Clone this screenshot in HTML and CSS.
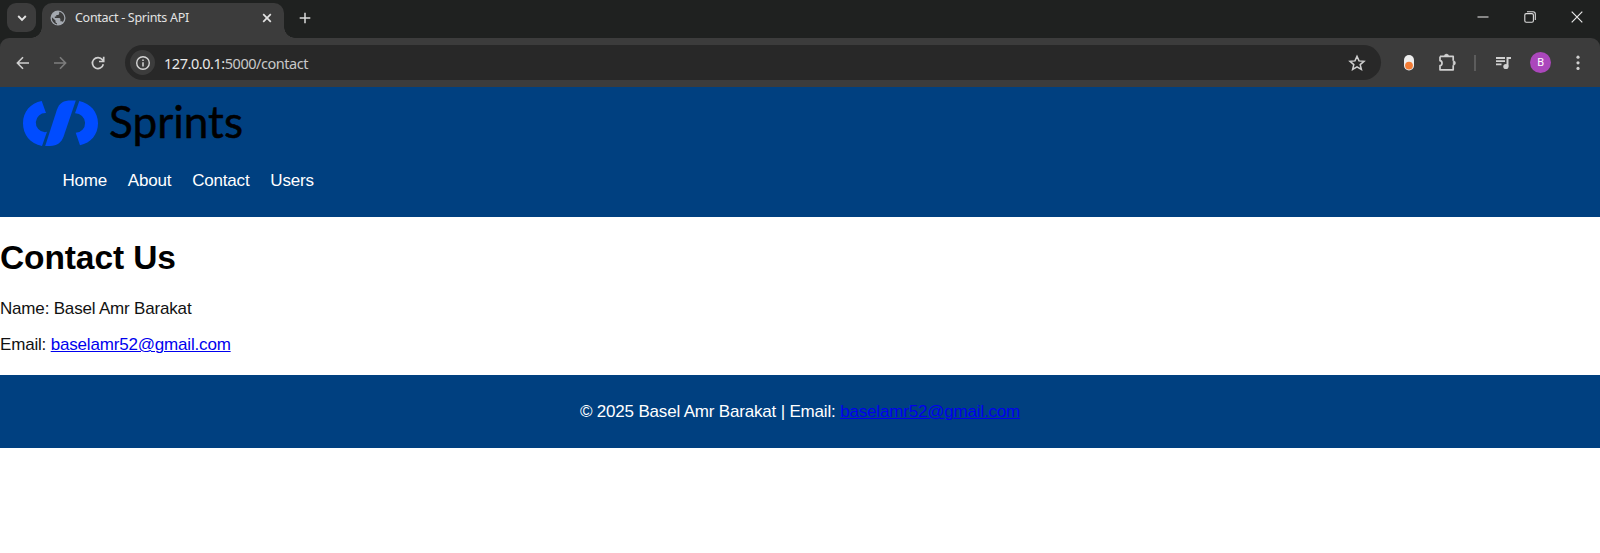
FILE: index.html
```html
<!DOCTYPE html>
<html lang="en">
<head>
<meta charset="utf-8">
<title>Contact - Sprints API</title>
<link rel="stylesheet" href="styles.css">
</head>
<body>
<div class="browser-chrome">
<div class="tabstrip">
  <div class="tab-search"><svg width="12" height="10" viewBox="0 0 12 10"><path d="M2.200 3 6 6.800 9.800 3" fill="none" stroke="#e3e3e3" stroke-width="1.900"/></svg></div>
  <div class="tab">
    <svg class="globe" width="16" height="16" viewBox="0 0 16 16"><circle cx="8" cy="8" r="7.500" fill="#a4a9b0"/><path d="M9.200 1.800v1.700c0 .9-.7 1.500-1.600 1.500H6.300v1.500H4.800V8H9c.8 0 1.400.6 1.400 1.400v1.800h1.200c.6 0 1 .4 1.200.8A6.300 6.300 0 0 0 9.200 1.800ZM1.900 7.200 5.500 10.500v1.300c0 .8.600 1.400 1.500 1.400v1.200A6.300 6.300 0 0 1 1.900 7.200Z" fill="#3c3c3c"/></svg>
    <span class="tab-title">Contact - Sprints API</span>
    <svg class="tab-close" width="10" height="10" viewBox="0 0 10 10"><path d="m1.200 1.200 7.600 7.600m0-7.600L1.200 8.800" stroke="#e3e3e3" stroke-width="1.700"/></svg>
  </div>
  <svg class="new-tab" width="12" height="12" viewBox="0 0 12 12"><path d="M6 .7v10.600M.7 6h10.600" stroke="#dadada" stroke-width="1.500"/></svg>
  <div class="window-buttons">
    <svg width="12" height="12" viewBox="0 0 12 12"><path d="M.5 6h11" stroke="#ddd" stroke-width="1.100"/></svg>
    <svg width="12" height="12" viewBox="0 0 12 12"><g fill="none" stroke="#ddd" stroke-width="1.100"><rect x=".8" y="2.600" width="8.600" height="8.600" rx="1.500"/><path d="M3 .8h6a2.300 2.300 0 0 1 2.300 2.300v6"/></g></svg>
    <svg width="12" height="12" viewBox="0 0 12 12"><path d="m.7.7 10.600 10.600m0-10.600L.7 11.300" stroke="#e8e8e8" stroke-width="1.200"/></svg>
  </div>
</div>
<div class="toolbar">
  <svg class="back" width="14" height="14" viewBox="0 0 14 14"><path d="M13 7H1.700M7 1.300 1.400 7 7 12.700" fill="none" stroke="#d0d0d0" stroke-width="1.600"/></svg>
  <svg class="forward" width="14" height="14" viewBox="0 0 14 14"><path d="M1 7h11.300M7 1.300 12.600 7 7 12.700" fill="none" stroke="#7d7d7d" stroke-width="1.600"/></svg>
  <svg class="reload" width="14" height="14" viewBox="0 0 14 14"><path d="M12.300 8.300A5.500 5.500 0 1 1 11.400 3.800L12.400 5M12.700.8v4.700H8" fill="none" stroke="#d0d0d0" stroke-width="1.700"/></svg>
  <div class="address">
    <span class="site-info"><svg width="16" height="16" viewBox="0 0 16 16"><circle cx="8" cy="8" r="6.300" fill="none" stroke="#d6d6d6" stroke-width="1.400"/><path d="M8 7.200v4.200M8 4.500v1.500" stroke="#d6d6d6" stroke-width="1.500"/></svg></span>
    <span class="url">127.0.0.1:<span class="url-path">5000/contact</span></span>
    <svg class="star" width="18" height="18" viewBox="0 0 18 18"><path d="m9 2.300 2 4.600 5 .4-3.800 3.300 1.200 4.900L9 12.900l-4.400 2.600 1.200-4.900L2 7.300l5-.4Z" fill="none" stroke="#d0d0d0" stroke-width="1.500"/></svg>
  </div>
  <svg class="extension" width="10" height="16" viewBox="0 0 10 16"><rect width="10" height="15.500" rx="5" fill="#eee"/><circle cx="5" cy="10.600" r="3.900" fill="#f37c35"/></svg>
  <svg class="puzzle" width="19" height="19" viewBox="0 0 19 19"><path d="M2 3.400h13.200v4.400M2 3.400v4.300c2.700.3 2.700 4.700 0 5v4.100h13.200v-4.600" fill="none" stroke="#d0d0d0" stroke-width="1.700" stroke-linejoin="round"/><path d="M6.300 3.300a2.200 2.200 0 0 1 4.400 0ZM15.200 7.700a2.300 2.300 0 0 1 0 4.600Z" fill="#d0d0d0" stroke="#d0d0d0" stroke-width=".5"/></svg>
  <span class="divider"></span>
  <svg class="media" width="17" height="14" viewBox="0 0 17 14"><path d="M1 2h9M1 5.200h9M1 8.400h5.500" stroke="#d0d0d0" stroke-width="1.800"/><path d="M12.500 10.500V2H16" fill="none" stroke="#d0d0d0" stroke-width="2"/><circle cx="10.900" cy="10.500" r="2.600" fill="#d0d0d0"/></svg>
  <span class="avatar">B</span>
  <svg class="more" width="4" height="16" viewBox="0 0 4 16"><g fill="#d0d0d0"><circle cx="2" cy="2.200" r="1.600"/><circle cx="2" cy="7.800" r="1.600"/><circle cx="2" cy="13.400" r="1.600"/></g></svg>
</div>
</div>
<header class="site-header">
  <svg class="logo" width="240" height="62" viewBox="22 90 240 62" role="img" aria-label="Sprints">
    <g fill="#004cff"><path d="M41.700 101.100 46 113A9 9 0 0 0 44.900 132.300L47 131.700 42 146.100C30 143.500 23 134.500 23 123.300 23 112 30.500 103 41.700 101.100Z"/><path d="M75.800 100.600H71C63.500 100.600 59.500 103 57 109.500L45.200 146H50C57.200 146 61.500 142.500 63.600 136.600Z"/><path d="M79.300 101C90.500 103.500 98 112 98 123.300 98 134.700 90.800 143 80 145.200L75.700 132.800A9.200 9.200 0 0 0 75 113.300Z"/></g>
    <text class="logo-text" x="109" y="138" textLength="134" lengthAdjust="spacingAndGlyphs">Sprints</text>
  </svg>
  <nav><ul class="nav-list"><li>Home</li><li>About</li><li>Contact</li><li>Users</li></ul></nav>
</header>
<main class="content">
  <h1>Contact Us</h1>
  <p>Name: Basel Amr Barakat</p>
  <p>Email: <a href="mailto:baselamr52@gmail.com">baselamr52@gmail.com</a></p>
</main>
<footer class="site-footer"><p>© 2025 Basel Amr Barakat | Email: <a href="mailto:baselamr52@gmail.com">baselamr52@gmail.com</a></p></footer>
</body>
</html>
```
FILE: styles.css
```css
* { box-sizing: border-box; }
body { margin: 0; height: 553px; overflow: hidden; background: #fff; font: 17px/20px "Liberation Sans", Arial, sans-serif; letter-spacing: -.18px; color: #111; }
svg { display: block; flex: none; overflow: visible; }
.browser-chrome { background: #1f2120; }
.tabstrip { display: flex; height: 38px; padding-left: 7px; }
.tab-search { display: flex; align-items: center; justify-content: center; width: 29px; height: 29px; margin-top: 3px; border-radius: 9px; background: #3c3c3c; }
.tab { position: relative; display: flex; align-items: center; width: 242px; height: 35px; margin: 3px 0 0 6px; padding: 0 12px 6px 8px; border-radius: 10px 10px 0 0; background: #3c3c3c; }
.tab::before, .tab::after { content: ""; position: absolute; bottom: 0; width: 11px; height: 11px; }
.tab::before { left: -11px; background: radial-gradient(circle at 0 0, transparent 10.5px, #3c3c3c 11px); }
.tab::after { right: -11px; background: radial-gradient(circle at 100% 0, transparent 10.5px, #3c3c3c 11px); }
.tab-title { margin-left: 9px; font: 12.5px/18px "Noto Sans", sans-serif; letter-spacing: -.29px; color: #e3e3e3; white-space: nowrap; }
.tab-close { margin-left: auto; }
.new-tab { margin: 12px 0 0 15px; }
.window-buttons { display: flex; gap: 35px; margin: 11px 17px 0 auto; }
.toolbar { display: flex; align-items: center; height: 49px; padding: 0 20px 0 16px; background: #3c3c3c; border-radius: 9px 9px 0 0; }
.forward { margin-left: 23px; }
.reload { margin-left: 24px; }
.address { display: flex; align-items: center; width: 1256px; height: 35px; margin-left: 20px; padding: 0 15px 0 5px; border-radius: 18px; background: #282828; }
.site-info { display: flex; align-items: center; justify-content: center; width: 25px; height: 25px; border-radius: 50%; background: #3c3c3c; }
.url { margin-left: 9px; font: 14.5px/20px "Noto Sans", sans-serif; letter-spacing: -.46px; color: #e8e8e8; }
.url-path { color: #c8c8c8; }
.star { margin-left: auto; }
.extension { margin-left: 23px; }
.puzzle { margin-left: 24px; }
.divider { width: 2px; height: 16px; margin-left: 17px; background: #5c5c5c; }
.media { margin-left: 19px; }
.avatar { width: 21px; height: 21px; margin-left: 18px; border-radius: 50%; background: #ab47bc; color: #fff; text-align: center; font: 11px/21px Roboto, sans-serif; }
.more { margin-left: auto; }
.site-header { height: 130px; padding: 3px 22px 0; background: #004080; }
.logo-text { font: 44.5px Lato, sans-serif; letter-spacing: 0; fill: #000; stroke: #000; stroke-width: .5px; }
.nav-list { display: flex; gap: 20.8px; margin: 19px 0 0; padding: 0 0 0 40.4px; list-style: none; color: #fff; }
.content { height: 158px; padding-top: 21px; }
h1 { margin: 0; font-size: 33.5px; line-height: 40px; color: #000; letter-spacing: -.1px; }
.content p { margin: 21px 0 0; line-height: 20px; }
.content p + p { margin-top: 16px; }
a { color: #0000ee; text-decoration-thickness: 1px; }
.site-footer { height: 73px; padding-top: 27px; background: #004080; color: #fff; text-align: center; }
.site-footer p { margin: 0; }
```
